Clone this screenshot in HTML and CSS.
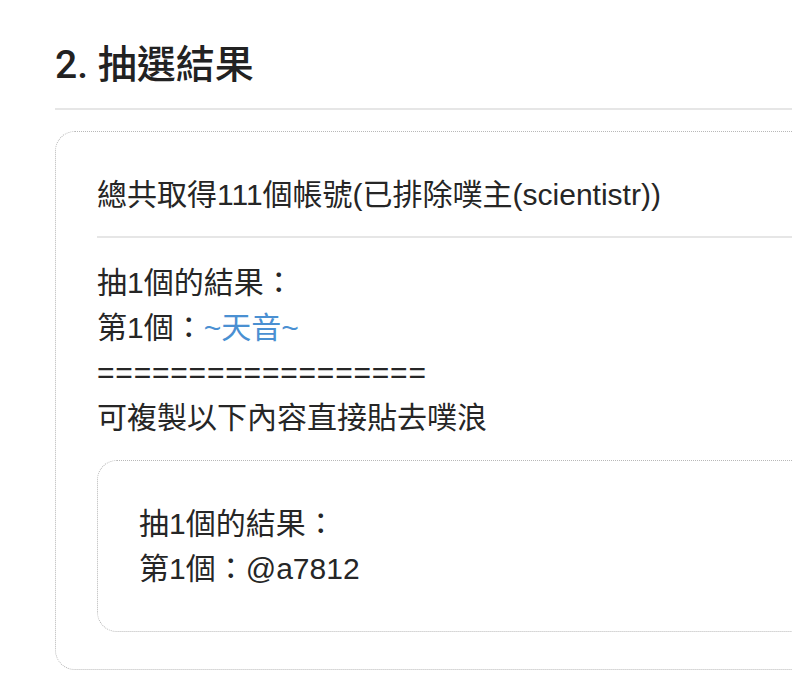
FILE: index.html
```html
<!DOCTYPE html>
<html lang="zh-Hant-TW">
<head>
    <meta charset="utf-8">
    <title>抽選結果</title>
    <link rel="stylesheet" href="styles.css">
</head>
<body>
    <div class="container">
        <h2 class="section-title">2. 抽選結果</h2>

        <div class="result-box">
            <p class="summary">總共取得111個帳號(已排除噗主(scientistr))</p>
            <hr class="divider">
            <div class="result-lines">
                抽1個的結果：<br>
                第1個：<a class="user-link" href="#">~天音~</a><br>
                <span class="separator">==================</span><br>
                可複製以下內容直接貼去噗浪
            </div>
            <div class="copy-box">
                抽1個的結果：<br>
                第1個：@a7812
            </div>
        </div>
    </div>
</body>
</html>
```

FILE: styles.css
```css
html, body {
    overflow-x: hidden;
}
body {
    margin: 0;
    background: #fff;
    color: #262626;
    font-family: "Liberation Sans", "Noto Sans CJK TC", sans-serif;
    font-size: 30px;
    line-height: 45px;
}
.container {
    width: 1000px;
    padding-left: 55px;
}
.section-title {
    margin: 42px 0 21px;
    padding-bottom: 20px;
    border-bottom: 2px solid #e6e6e6;
    font-family: Roboto, "Noto Sans CJK TC", sans-serif;
    font-size: 39px;
    line-height: 46px;
    font-weight: 500;
    color: #222;
}
.result-box {
    border: 1px dotted #b8b8b8;
    border-radius: 20px;
    padding: 40px 40px 37px 41px;
}
.summary {
    margin: 0;
}
.divider {
    margin: 19px 0 22px;
    border: none;
    border-top: 2px solid #e6e6e6;
}
.user-link {
    color: #4a90d2;
    text-decoration: none;
}
.separator {
    letter-spacing: 0.8px;
}
.copy-box {
    margin-top: 20px;
    border: 1px dotted #b8b8b8;
    border-radius: 20px;
    padding: 40px 41px;
}
```
